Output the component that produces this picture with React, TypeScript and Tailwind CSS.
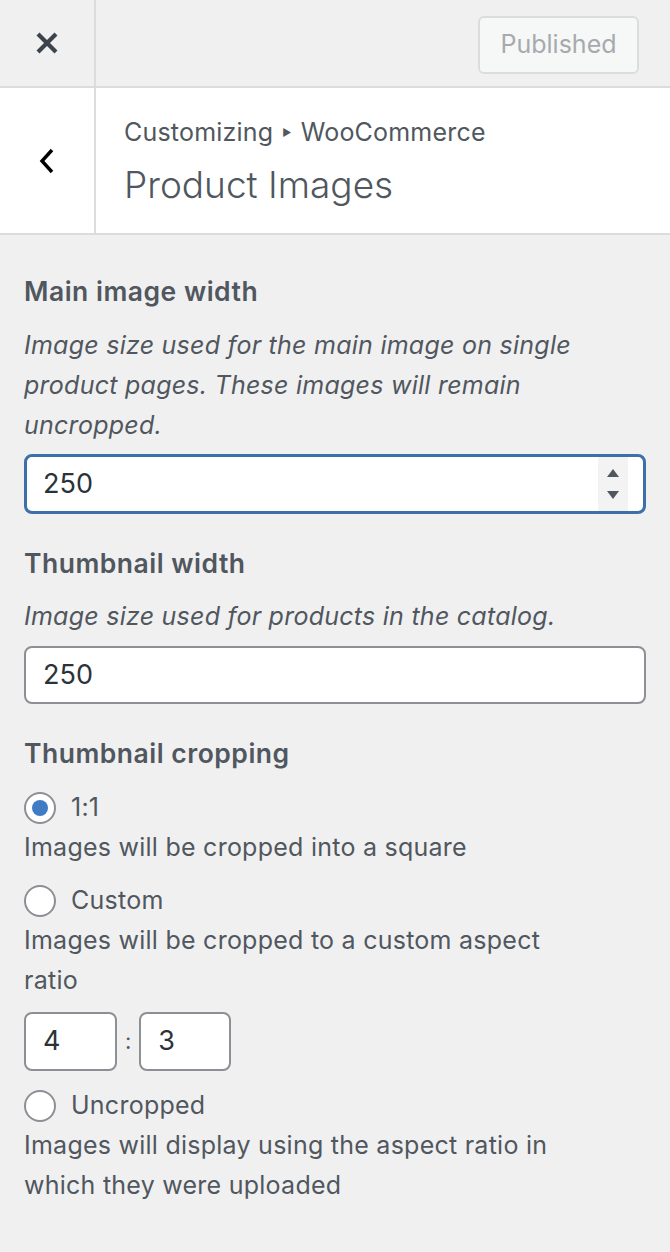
import React from "react";

const font = { fontFamily: 'Inter, "Noto Sans", sans-serif' };

function Radio({ checked, label }: { checked?: boolean; label: string }) {
  return (
    <label className="flex h-[38px] items-center gap-[15px] text-[25px] tracking-[0.25px] text-[#50575e]">
      <span className="flex h-[32px] w-[32px] items-center justify-center rounded-full border-2 border-[#8c8f94] bg-white">
        {checked && <span className="h-[16px] w-[16px] rounded-full bg-[#3f7cc4]" />}
      </span>
      {label}
    </label>
  );
}

export default function App() {
  return (
    <div className="min-h-[1252px] w-[670px] bg-[#f0f0f1]" style={font}>
      {/* top bar */}
      <div className="flex h-[88px] border-b-2 border-[#dcdcde]">
        <button className="flex w-[96px] items-center justify-center border-r-2 border-[#dcdcde] text-[#3c434a]">
          <svg width="24" height="24" viewBox="0 0 24 24" fill="none">
            <path d="M3 3 21 21M21 3 3 21" stroke="currentColor" strokeWidth="4.2" />
          </svg>
        </button>
        <div className="flex flex-1 items-center justify-end pr-[31px] pt-[3px]">
          <button className="h-[58px] w-[161px] rounded-[6px] border-2 border-[#dcdcde] bg-[#f6f7f7] text-[25px] text-[#a7aaad]">
            Published
          </button>
        </div>
      </div>

      {/* section header */}
      <div className="flex h-[147px] border-b-2 border-[#dcdcde] bg-white">
        <button className="flex w-[96px] items-center justify-center border-r-2 border-[#dcdcde] text-black">
          <svg width="20" height="28" viewBox="0 0 20 28" fill="none">
            <path d="M15 3 5 14l10 11" stroke="currentColor" strokeWidth="3.4" />
          </svg>
        </button>
        <div className="flex flex-col justify-center pl-[28px] text-[#50575e]">
          <div className="flex items-center gap-[9px] text-[25px] leading-[34px] tracking-[0.2px]">
            Customizing
            <span className="text-[10px]">▶</span>
            WooCommerce
          </div>
          <div className="mt-[14px] text-[37px] font-light leading-[44px]">Product Images</div>
        </div>
      </div>

      {/* controls */}
      <div className="px-[24px] pt-[38px] text-[#50575e]">
        <h3 className="text-[26.5px] font-semibold leading-[36px] tracking-[0.5px]">Main image width</h3>
        <p className="mt-[16px] text-[25px] italic leading-[40px] tracking-[0.25px]">
          Image size used for the main image on single product pages. These images will remain uncropped.
        </p>
        <div className="mt-[9px] flex h-[60px] items-center rounded-[8px] border-[3px] border-[#3d6fa8] bg-white">
          <span className="flex-1 pl-[16px] text-[27px] text-[#2c3338]">250</span>
          <span className="mr-[15px] flex h-[54px] w-[30px] flex-col items-center justify-center gap-[14px] bg-[#f3f3f3]">
            <svg width="12" height="8" viewBox="0 0 12 8">
              <path d="M6 0 12 8H0z" fill="#50575e" />
            </svg>
            <svg width="12" height="8" viewBox="0 0 12 8">
              <path d="M0 0h12L6 8z" fill="#50575e" />
            </svg>
          </span>
        </div>

        <h3 className="mt-[31px] text-[26.5px] font-semibold leading-[36px] tracking-[0.5px]">Thumbnail width</h3>
        <p className="mt-[15px] text-[25px] italic leading-[40px] tracking-[0.25px]">
          Image size used for products in the catalog.
        </p>
        <div className="mt-[10px] flex h-[58px] items-center rounded-[8px] border-2 border-[#8c8f94] bg-white pl-[17px] text-[27px] text-[#2c3338]">
          250
        </div>

        <h3 className="mt-[31px] text-[26.5px] font-semibold leading-[36px] tracking-[0.5px]">Thumbnail cropping</h3>
        <div className="mt-[18px]">
          <Radio checked label="1:1" />
          <p className="text-[25px] leading-[40px] tracking-[0.25px]">Images will be cropped into a square</p>
        </div>
        <div className="mt-[15px]">
          <Radio label="Custom" />
          <p className="max-w-[560px] text-[25px] leading-[40px] tracking-[0.25px]">
            Images will be cropped to a custom aspect ratio
          </p>
          <div className="mt-[12px] flex items-center gap-[8px]">
            <div className="flex h-[59px] w-[93px] items-center rounded-[8px] border-2 border-[#8c8f94] bg-white pl-[17px] text-[27px] text-[#2c3338]">
              4
            </div>
            <span className="text-[22px]">:</span>
            <div className="flex h-[59px] w-[92px] items-center rounded-[8px] border-2 border-[#8c8f94] bg-white pl-[17px] text-[27px] text-[#2c3338]">
              3
            </div>
          </div>
        </div>
        <div className="mt-[16px]">
          <Radio label="Uncropped" />
          <p className="max-w-[560px] text-[25px] leading-[40px] tracking-[0.25px]">
            Images will display using the aspect ratio in which they were uploaded
          </p>
        </div>
      </div>
    </div>
  );
}
